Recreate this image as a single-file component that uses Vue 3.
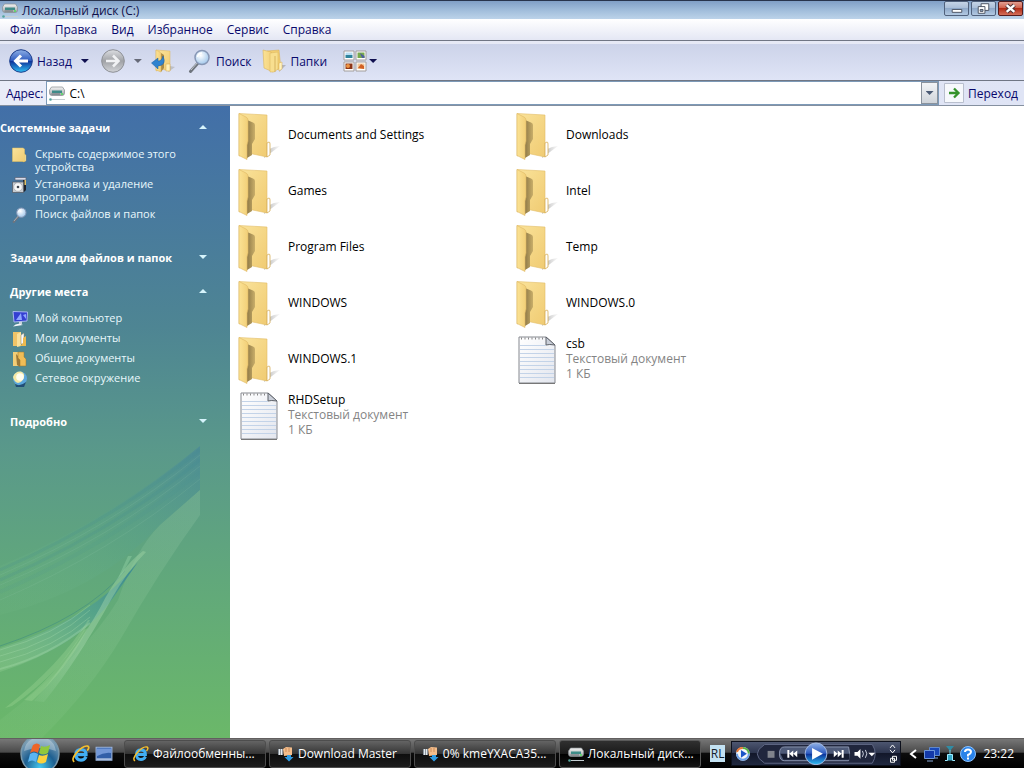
<template>
  <div class="window">
    <svg class="defs" aria-hidden="true">
      <defs>
        <linearGradient id="gFolder" x1="0" y1="0" x2="1" y2="1">
          <stop offset="0" stop-color="#fae39b" />
          <stop offset="1" stop-color="#f0cb72" />
        </linearGradient>
        <linearGradient id="gFlap" x1="0" y1="0" x2="1" y2="0">
          <stop offset="0" stop-color="#fbe294" />
          <stop offset="1" stop-color="#f2cf78" />
        </linearGradient>
        <linearGradient id="gDark" x1="0" y1="0" x2="1" y2="0">
          <stop offset="0" stop-color="#8f7a48" />
          <stop offset="1" stop-color="#c9ae69" />
        </linearGradient>
        <linearGradient id="gShadow" x1="0" y1="0" x2="1" y2="0">
          <stop offset="0" stop-color="#8c8c8c" />
          <stop offset="1" stop-color="#c8c8c8" stop-opacity="0.2" />
        </linearGradient>
        <linearGradient id="gPaper" x1="0" y1="0" x2="1" y2="1">
          <stop offset="0" stop-color="#ffffff" />
          <stop offset="1" stop-color="#e3e6ee" />
        </linearGradient>
        <linearGradient id="gBlue" x1="0" y1="0" x2="0" y2="1">
          <stop offset="0" stop-color="#8fb0e6" />
          <stop offset="0.48" stop-color="#2f5cc0" />
          <stop offset="0.5" stop-color="#0c2f98" />
          <stop offset="1" stop-color="#2fc0f4" />
        </linearGradient>
        <linearGradient id="gGrey" x1="0" y1="0" x2="0" y2="1">
          <stop offset="0" stop-color="#dcdee2" />
          <stop offset="0.5" stop-color="#a0a2a6" />
          <stop offset="1" stop-color="#d2d4d8" />
        </linearGradient>
        <radialGradient id="gOrb" cx="0.5" cy="0.85" r="0.8">
          <stop offset="0" stop-color="#43c6ee" />
          <stop offset="0.5" stop-color="#1e5f90" />
          <stop offset="1" stop-color="#8ba9bd" />
        </radialGradient>
        <linearGradient id="gDrive" x1="0" y1="0" x2="0" y2="1">
          <stop offset="0" stop-color="#f4f4f4" />
          <stop offset="1" stop-color="#9da2a6" />
        </linearGradient>
        <radialGradient id="gLens" cx="0.4" cy="0.35" r="0.7">
          <stop offset="0" stop-color="#ffffff" />
          <stop offset="1" stop-color="#9cc4ea" />
        </radialGradient>
      </defs>

      <symbol id="folder" viewBox="0 0 48 48">
        <path d="M28 46 L44 34 L38 35 L31 38Z" fill="url(#gShadow)" opacity="0.8" />
        <path d="M3 1.500 L31 3 V45 L12 41 L3 44Z" fill="url(#gFolder)" stroke="#e2bd68" stroke-width="0.600" />
        <path d="M11 8 L17 10.500 Q19 11 19 13 V27 L16 32 V43 L11 46Z" fill="url(#gDark)" />
        <path d="M3 1.500 L10 5 Q12 6 12 8 V29 L11 33 V47.500 L3 43.500Z" fill="url(#gFlap)" stroke="#dfb964" stroke-width="0.600" />
        <path d="M31 31 L33 30 Q34 30 34 32 V43 L31 45Z" fill="#fff" stroke="#d5ac55" stroke-width="0.800" />
      </symbol>

      <symbol id="text" viewBox="0 0 48 48">
        <path d="M5 1 H32 L41 9 V47 H5Z" fill="url(#gPaper)" stroke="#85888f" />
        <path d="M32 1 L41 9 Q35 8 32 9Z" fill="#c9ced8" stroke="#5d6168" />
        <path d="M6 9.500H32M6 13.500H40M6 17.500H40M6 21.500H40M6 25.500H40M6 29.500H40M6 33.500H40M6 37.500H40M6 41.500H40" stroke="#c3d3e8" />
        <path d="M7 2.500H31" stroke="#888" stroke-width="2" stroke-dasharray="1 2.500" />
        <path d="M5 47.500H41" stroke="#777" />
      </symbol>

      <symbol id="drive" viewBox="0 0 16 16">
        <path d="M2.500 2 H13.500 L15.500 5 V8 Q15.500 10.500 13 10.500 H3 Q0.500 10.500 0.500 8 V5Z" fill="url(#gDrive)" stroke="#868c90" stroke-width="0.700" />
        <path d="M3 5.500H13V8H3Z" fill="#3f8b88" />
        <path d="M2.500 9H11" stroke="#6a7076" />
        <path d="M12 9H14" stroke="#4fe05b" stroke-width="1.500" />
        <path d="M3 14.500H16" stroke="#c5ced2" />
        <circle cx="1.500" cy="14.500" r="1.300" fill="#53a49c" />
      </symbol>

      <symbol id="back" viewBox="0 0 24 24">
        <circle cx="12" cy="12" r="11.300" fill="url(#gBlue)" stroke="#1d3e8c" />
        <path d="M19 12H7M12 6.500 L6.500 12 L12 17.500" fill="none" stroke="#fff" stroke-width="3" />
      </symbol>
      <symbol id="forward" viewBox="0 0 24 24">
        <circle cx="12" cy="12" r="11.300" fill="url(#gGrey)" stroke="#8d9096" />
        <path d="M5 12H17M12 6.500 L17.500 12 L12 17.500" fill="none" stroke="#f1f2f4" stroke-width="2.500" />
      </symbol>
      <symbol id="up" viewBox="0 0 24 24">
        <path d="M17 23L24 18L19 17Z" fill="#aaa" opacity="0.600" />
        <path d="M5 1L19 2V22L10 20L5 22Z" fill="url(#gFolder)" stroke="#dcb45c" stroke-width="0.500" />
        <path d="M10 4L13 6V19L10 23Z" fill="#a98b48" />
        <path d="M5 1L9 3Q10 4 10 6V23L5 21Z" fill="url(#gFlap)" stroke="#dcb45c" stroke-width="0.500" />
        <path d="M15 15H19V22H15Z" fill="#fff0b8" stroke="#d5a94b" stroke-width="0.500" />
        <path d="M0.500 14L7 9V12Q11 12 12 7Q16 16 7 17V20Z" fill="#2f83cf" stroke="#1a5c9e" stroke-width="0.500" />
      </symbol>
      <symbol id="search" viewBox="0 0 24 24">
        <path d="M10 14L2.500 22.500" stroke="#6f757e" stroke-width="3" stroke-linecap="round" />
        <path d="M9.500 13.500L3 21" stroke="#c3c8ce" stroke-width="1" />
        <circle cx="14" cy="8.500" r="7" fill="url(#gLens)" stroke="#8797b5" stroke-width="1.500" />
        <path d="M9.500 8A5 5 0 0 1 14 4" fill="none" stroke="#fff" stroke-width="1.500" />
      </symbol>
      <symbol id="folders" viewBox="0 0 24 24">
        <path d="M17 23L24 16L18 16Z" fill="#999" opacity="0.600" />
        <path d="M5 2L17 1L19 20L10 21Z" fill="#f2cf72" stroke="#d8ad51" stroke-width="0.500" />
        <path d="M1 1L9 3L11 5V23L2 19Z" fill="url(#gFlap)" stroke="#dab35a" stroke-width="0.600" />
        <path d="M8 4L16 3V20L12 23H8Z" fill="#f8df8f" stroke="#dab35a" stroke-width="0.500" />
        <path d="M13 7V23" stroke="#c9a04a" stroke-width="0.700" />
        <path d="M17 14L20 13V20L17 22Z" fill="#fff3c0" stroke="#d8ad51" stroke-width="0.500" />
      </symbol>
      <symbol id="views" viewBox="0 0 24 24">
        <path d="M1 2H11V11H1ZM13 2H23V11H13ZM1 13H11V22H1ZM13 13H23V22H13Z" fill="#fff" stroke="#a29d9b" />
        <path d="M2.500 3.500H9.500V6H2.500Z" fill="#b7ddf2" />
        <path d="M2.500 6H9.500V9H2.500Z" fill="#2f849c" />
        <path d="M14.500 3.500H21.500V9H14.500Z" fill="#77a94c" />
        <path d="M17 4L21.500 7V9H19Z" fill="#4e5f9c" />
        <path d="M2.500 14.500H9.500V20H2.500Z" fill="#8c3517" />
        <circle cx="5" cy="17" r="2" fill="#ed9342" />
        <path d="M14.500 14.500H21.500V20H14.500Z" fill="#f0c79a" />
        <path d="M15 19L18 15L21 17V20Z" fill="#d26024" />
      </symbol>

      <symbol id="smallFolder" viewBox="0 0 16 16">
        <path d="M11 6L14 8V14L11 15Z" fill="#f7e7ad" stroke="#b99a4d" stroke-width="0.500" />
        <path d="M0.500 1H11L12.500 2V14.500H0.500Z" fill="url(#gFolder)" stroke="#e4c25f" stroke-width="0.500" />
      </symbol>
      <symbol id="programs" viewBox="0 0 16 16">
        <path d="M3 0.500H14V3H3Z" fill="#d8dcea" stroke="#5a6174" stroke-width="0.700" />
        <path d="M11 3H14V13L12 15Z" fill="#20222a" />
        <path d="M12.500 3H14V8H12.500Z" fill="#e0c168" />
        <path d="M0.500 5H11.500V15.500H0.500Z" fill="#c6cbd0" stroke="#50545c" stroke-width="0.700" />
        <circle cx="6" cy="10" r="4.300" fill="#f7f7f7" stroke="#8f949c" stroke-width="0.500" />
        <circle cx="6" cy="10" r="1.300" fill="#414750" />
      </symbol>
      <symbol id="computer" viewBox="0 0 16 16">
        <path d="M1 0.500L15.500 1L15 10L2 11Z" fill="#343fd2" stroke="#a7b7ee" />
        <path d="M4 9L9 2L10 9ZM11 4L14 3V8Z" fill="#8ea6ff" />
        <path d="M7 11L10 10.500V13H7Z" fill="#cbd3dc" />
        <path d="M1 15.500Q5 11 11 14Z" fill="#f4f7fa" />
      </symbol>
      <symbol id="documents" viewBox="0 0 16 16">
        <path d="M1 1H9V15H1Z" fill="#f0c468" />
        <path d="M5 3L9 1V15L5 16Z" fill="#fae09b" />
        <path d="M9 4L12 2V13H9Z" fill="#f7fafe" stroke="#8f8361" stroke-width="0.500" />
        <path d="M11 7L14 5V15H8L11 12Z" fill="#edb94f" />
      </symbol>
      <symbol id="shared" viewBox="0 0 16 16">
        <path d="M1 1H8V15H1Z" fill="#f3cd76" />
        <path d="M4 3L8 7V16L5 14Z" fill="#9c7838" />
        <path d="M6 1H12V6L14 8V15H8V9L6 7Z" fill="#f0bd57" stroke="#99742f" stroke-width="0.500" />
      </symbol>
      <symbol id="network" viewBox="0 0 16 16">
        <circle cx="8" cy="7.500" r="7" fill="#5ba6dc" />
        <path d="M1 6Q3 0 9 0.500Q13 2 12 6Q11 11 6 12Q2 11 1 6Z" fill="#f5e9a4" />
        <circle cx="8" cy="6" r="3.800" fill="#fffef0" />
        <path d="M3 13Q8 16 14 11L12 16H4Z" fill="#214d75" />
      </symbol>

      <symbol id="ie" viewBox="0 0 16 16">
        <path d="M12.500 10.500Q11 13.500 8 13.500Q3.500 13.500 3.500 8.500Q3.500 4 8 4Q12.500 4 12.500 8.500H5" fill="none" stroke="#42aef2" stroke-width="2.800" />
        <path d="M2 15Q-1 13 4 7Q10 0 14 1Q16 2 13.500 5" fill="none" stroke="#f5bf2d" stroke-width="1.500" />
      </symbol>
      <symbol id="desktop" viewBox="0 0 16 16">
        <path d="M1 2H15V13.500H1Z" fill="#315ea8" stroke="#9cb5dc" />
        <path d="M1.500 3H14.500V7Q8 6 1.500 10Z" fill="#7297d7" />
        <path d="M1.500 12.500H14.500" stroke="#e0e9f7" />
      </symbol>
      <symbol id="download" viewBox="0 0 16 16">
        <path d="M0 3H5V9H0Z" fill="#8c959e" />
        <path d="M1.500 3V9M3.500 3V9" stroke="#e5eaee" />
        <path d="M5 3L8 1L14 1.500L14 9L6 10Z" fill="#f4bd8b" />
        <path d="M8 2V6M11 2V6" stroke="#b97848" stroke-width="0.700" />
        <path d="M9 9H13V11H15.500L11 15.500L6.500 11H9Z" fill="#2f9be2" />
      </symbol>
      <symbol id="flag" viewBox="0 0 40 40">
        <circle cx="20" cy="20" r="19" fill="url(#gOrb)" stroke="#7898ac" stroke-width="1.500" />
        <path d="M4 17Q6 4 20 3Q34 4 36 17Q20 11 4 17Z" fill="#fff" opacity="0.300" />
        <path d="M13 11Q17 8 20 11L18 19Q14 16 10 19Z" fill="#ee6429" />
        <path d="M21 12Q25 14 30 11L28 19Q23 22 19 19Z" fill="#91c83d" />
        <path d="M10 20Q14 17 18 20L16 28Q12 25 8 28Z" fill="#5bb5f2" />
        <path d="M19 21Q23 23 28 20L26 28Q21 31 17 28Z" fill="#fcd13c" />
      </symbol>
    </svg>

    <header class="titlebar">
      <svg class="i16"><use href="#drive" /></svg>
      <h1>Локальный диск (C:)</h1>
      <div class="winbuttons">
        <button aria-label="Свернуть">
          <svg viewBox="0 0 24 13"><path d="M7.500 7.500H17.500V10.500H7.500Z" fill="#fff" stroke="#4a5361" /></svg>
        </button>
        <button aria-label="Восстановить">
          <svg viewBox="0 0 24 13">
            <path d="M9.500 1.500H17.500V8.500H9.500Z" fill="#fff" stroke="#4a5361" />
            <path d="M6.500 4.500H13.500V11.500H6.500Z" fill="#fff" stroke="#4a5361" />
            <path d="M8.500 7.500H11.500V9.500H8.500Z" fill="#8ea4bf" stroke="#4a5361" />
          </svg>
        </button>
        <button class="close" aria-label="Закрыть">
          <svg viewBox="0 0 24 13">
            <path d="M8 3L16 10M16 3L8 10" stroke="#4d3236" stroke-width="4.500" />
            <path d="M8 3L16 10M16 3L8 10" stroke="#fff" stroke-width="2.500" />
          </svg>
        </button>
      </div>
    </header>

    <nav class="menubar">
      <button v-for="item in menu" :key="item">{{ item }}</button>
    </nav>

    <div class="toolbar">
      <button class="tool"><svg class="i24"><use href="#back" /></svg>Назад</button>
      <button class="arrow" aria-label="Назад: список"></button>
      <button class="tool forward" aria-label="Вперед"><svg class="i24"><use href="#forward" /></svg></button>
      <button class="arrow dim" aria-label="Вперед: список"></button>
      <button class="tool up" aria-label="Вверх"><svg class="i24"><use href="#up" /></svg></button>
      <button class="tool find"><svg class="i24"><use href="#search" /></svg>Поиск</button>
      <button class="tool tree"><svg class="i24"><use href="#folders" /></svg>Папки</button>
      <button class="tool view" aria-label="Вид"><svg class="i24"><use href="#views" /></svg><span class="arrow"></span></button>
    </div>

    <form class="address" @submit.prevent>
      <label for="path">Адрес:</label>
      <div class="field">
        <svg class="i16"><use href="#drive" /></svg>
        <input id="path" v-model="path" type="text" />
        <button type="button" class="drop" aria-label="Список адресов"><span class="arrow"></span></button>
      </div>
      <button class="go">
        <svg viewBox="0 0 20 20">
          <path d="M0.500 0.500H19.500V19.500H0.500Z" fill="#f6f8fc" stroke="#b9bfce" />
          <path d="M5 10H14M10 5.500L14.500 10L10 14.500" fill="none" stroke="#35932c" stroke-width="2.300" />
        </svg>
        Переход
      </button>
    </form>

    <div class="body">
      <aside class="sidebar">
        <svg class="aurora" viewBox="0 0 200 298" aria-hidden="true">
          <defs>
            <linearGradient id="gBand" x1="1" y1="0" x2="0" y2="1">
              <stop offset="0" stop-color="#3f7fa0" stop-opacity="0.45" />
              <stop offset="0.5" stop-color="#58a58e" stop-opacity="0.2" />
              <stop offset="1" stop-color="#8fd09a" stop-opacity="0.05" />
            </linearGradient>
            <linearGradient id="gRay" x1="1" y1="0" x2="0" y2="1">
              <stop offset="0" stop-color="#9fcfae" stop-opacity="0.22" />
              <stop offset="1" stop-color="#a5dba0" stop-opacity="0.08" />
            </linearGradient>
            <linearGradient id="gWing" x1="1" y1="0" x2="0" y2="1">
              <stop offset="0" stop-color="#2d7d97" stop-opacity="0.8" />
              <stop offset="0.4" stop-color="#4b9d98" stop-opacity="0.55" />
              <stop offset="1" stop-color="#b5e4ab" stop-opacity="0.2" />
            </linearGradient>
            <linearGradient id="gBeam" x1="1" y1="0" x2="0" y2="1">
              <stop offset="0" stop-color="#a4d8a6" stop-opacity="0.4" />
              <stop offset="0.6" stop-color="#a8d8b0" stop-opacity="0.45" />
              <stop offset="1" stop-color="#a4d8a6" stop-opacity="0.1" />
            </linearGradient>
          </defs>
          <path d="M200 6Q110 80 0 126V175Q100 150 160 85L200 50Z" fill="url(#gBand)" />
          <g fill="none" stroke="#3e8795" stroke-opacity="0.15">
            <path d="M200 10Q110 82 0 130" stroke-width="3" />
            <path d="M200 20Q110 93 0 140" stroke-width="3" />
            <path d="M200 32Q110 104 0 152" stroke-width="4" stroke-opacity="0.08" />
          </g>
          <g fill="none" stroke="#9bd0b0" stroke-opacity="0.14">
            <path d="M200 15Q110 88 0 135" />
            <path d="M200 26Q110 99 0 145" />
            <path d="M200 39Q110 113 0 160" />
          </g>
          <path d="M200 50V75Q160 130 120 200Q90 250 42 298H0V280Q85 215 118 160Q135 110 160 85Z" fill="url(#gRay)" />
          <path d="M138 122Q92 180 0 208V232Q80 206 113 158Z" fill="url(#gWing)" />
          <g fill="none" stroke="#aee0b4" stroke-opacity="0.3">
            <path d="M90 165Q55 195 0 210" />
            <path d="M90 170Q55 202 0 216" />
            <path d="M90 177Q55 208 0 222" />
            <path d="M90 183Q50 216 0 229" stroke-width="2" />
          </g>
          <path d="M125 131Q85 178 0 206" fill="none" stroke="#2f8088" stroke-opacity="0.4" />
          <path d="M143 111L146 112Q128 130 112 158Q78 220 44 262L34 261Q75 212 100 168Q120 128 143 111Z" fill="url(#gBeam)" />
          <path d="M128 116H132L122 134L118 138Z" fill="#8ccba0" fill-opacity="0.5" />
          <path d="M88 180Q60 225 5 268L12 266Q65 230 90 180Z" fill="#b4e2a4" fill-opacity="0.25" />
          <path d="M84 190Q60 230 24 260L32 261Q68 228 88 188Z" fill="#b4e2a4" fill-opacity="0.25" />
        </svg>

        <section v-for="group in groups" :key="group.title" class="group">
          <h2>
            <button :aria-expanded="group.open">{{ group.title }}<span class="chevron" :class="{ open: group.open }"></span></button>
          </h2>
          <ul v-if="group.open" :class="{ places: group.places }">
            <li v-for="item in group.items" :key="item.text">
              <a href="#"><svg class="i16"><use :href="'#' + item.icon" /></svg><span>{{ item.text }}</span></a>
            </li>
          </ul>
        </section>
      </aside>

      <main class="files">
        <a v-for="file in files" :key="file.name" href="#" class="file">
          <svg class="i48"><use :href="file.size ? '#text' : '#folder'" /></svg>
          <span class="info">
            <span>{{ file.name }}</span>
            <template v-if="file.size">
              <span class="meta">Текстовый документ</span>
              <span class="meta">{{ file.size }}</span>
            </template>
          </span>
        </a>
      </main>
    </div>

    <footer class="taskbar">
      <button class="start" aria-label="Пуск"><svg><use href="#flag" /></svg></button>
      <div class="quick">
        <button aria-label="Internet Explorer"><svg class="i18"><use href="#ie" /></svg></button>
        <button aria-label="Рабочий стол"><svg class="i18"><use href="#desktop" /></svg></button>
      </div>
      <div class="tasks">
        <button v-for="task in tasks" :key="task.text" class="task" :class="{ active: task.active }">
          <svg class="i16"><use :href="'#' + task.icon" /></svg><span>{{ task.text }}</span>
        </button>
      </div>
      <button class="lang">RL</button>
      <div class="player">
        <svg viewBox="0 0 170 24" aria-hidden="true">
          <circle cx="11" cy="12" r="7" fill="#f5f7fa" />
          <path d="M5 10A6 6 0 0 1 11 6" fill="none" stroke="#e87836" stroke-width="2" />
          <path d="M11 6A6 6 0 0 1 17 12" fill="none" stroke="#57b446" stroke-width="2" />
          <path d="M17 12A6 6 0 0 1 5 12" fill="none" stroke="#6ca1e9" stroke-width="2" />
          <path d="M9 8L15 12L9 16Z" fill="#1b55c8" />
          <path d="M33 2.500H142Q148 12 142 21.500H33Q18 12 33 2.500Z" fill="#20263d" stroke="#5d6683" />
          <path d="M36 9H43V16H36Z" fill="#80838c" />
          <path d="M53 5H118Q120 12 118 19H53Q48 19 48 12Q48 5 53 5Z" fill="#4e5a78" stroke="#8993ae" />
          <path d="M49 12H119V18H52Z" fill="#151b30" />
          <path d="M56 8H58V16H56ZM62 8.500V15.500L58 12ZM66 8.500V15.500L62 12Z" fill="#fff" />
          <path d="M103 8.500L107 12L103 15.500ZM107 8.500L111 12L107 15.500ZM111 8H113V16H111Z" fill="#fff" />
          <circle cx="85" cy="12" r="11" fill="url(#gBlue)" stroke="#a4b9df" />
          <path d="M81 6L92 12L81 18Z" fill="#fff" />
          <path d="M124 10H127L130 7V17L127 14H124Z" fill="#fff" />
          <path d="M132 9Q134 12 132 15M135 8Q138 12 135 16" fill="none" stroke="#ccd1df" />
          <path d="M138 11H145L141.500 14.500Z" fill="#fff" />
          <path d="M160 6L162.500 3L165 6M160 8L162.500 11L165 8" fill="none" stroke="#fff" />
          <path d="M162.500 14.500H166.500V18.500H162.500ZM160.500 16.500H164.500V20.500H160.500Z" fill="#111827" stroke="#fff" />
        </svg>
      </div>
      <div class="tray">
        <svg class="hide" viewBox="0 0 8 10"><path d="M7 1L2 5L7 9" fill="none" stroke="#fff" stroke-width="2" /></svg>
        <svg class="i16" viewBox="0 0 16 16">
          <path d="M5.500 1.500H15.500V9.500H5.500Z" fill="#1a49b8" stroke="#5f88cc" />
          <path d="M0.500 4.500H10.500V12.500H0.500Z" fill="#1339a8" stroke="#6f97d8" />
          <path d="M3 15H9M11 12H14" stroke="#89a9da" />
        </svg>
        <svg class="narrow" viewBox="0 0 12 16">
          <path d="M2 0H10L6 5Z" fill="#318ca4" />
          <path d="M6 4V8" stroke="#75d8ea" />
          <path d="M1 14.500H3.500V8.500H8.500V14.500H11" fill="#36a9c8" stroke="#9eeaff" />
        </svg>
        <svg class="i16" viewBox="0 0 16 16">
          <circle cx="8" cy="8" r="7.500" fill="#2a83ea" stroke="#8cc3ff" />
          <path d="M5 6Q5 3.500 8 3.500Q11 3.500 11 6Q11 7.500 8 9V10.500M8 11.500V13.500" fill="none" stroke="#fff" stroke-width="2" />
        </svg>
        <time>23:22</time>
      </div>
    </footer>
  </div>
</template>

<script setup>
import { ref } from 'vue';

const path = ref('C:\\');

const menu = ['Файл', 'Правка', 'Вид', 'Избранное', 'Сервис', 'Справка'];

const groups = ref([
  {
    title: 'Системные задачи',
    open: true,
    items: [
      { icon: 'smallFolder', text: 'Скрыть содержимое этого устройства' },
      { icon: 'programs', text: 'Установка и удаление программ' },
      { icon: 'search', text: 'Поиск файлов и папок' },
    ],
  },
  { title: 'Задачи для файлов и папок', open: false },
  {
    title: 'Другие места',
    open: true,
    places: true,
    items: [
      { icon: 'computer', text: 'Мой компьютер' },
      { icon: 'documents', text: 'Мои документы' },
      { icon: 'shared', text: 'Общие документы' },
      { icon: 'network', text: 'Сетевое окружение' },
    ],
  },
  { title: 'Подробно', open: false },
]);

const files = [
  { name: 'Documents and Settings' },
  { name: 'Downloads' },
  { name: 'Games' },
  { name: 'Intel' },
  { name: 'Program Files' },
  { name: 'Temp' },
  { name: 'WINDOWS' },
  { name: 'WINDOWS.0' },
  { name: 'WINDOWS.1' },
  { name: 'csb', size: '1 КБ' },
  { name: 'RHDSetup', size: '1 КБ' },
];

const tasks = [
  { icon: 'ie', text: 'Файлообменны...' },
  { icon: 'download', text: 'Download Master' },
  { icon: 'download', text: '0% kmeYXACA35...' },
  { icon: 'drive', text: 'Локальный диск...', active: true },
];
</script>

<style>
body {
  margin: 0;
}
</style>

<style scoped>
.window {
  display: flex;
  flex-direction: column;
  min-height: 100vh;
  font-family: "Open Sans", "Noto Sans", sans-serif;
  font-size: 12px;
  line-height: 15px;
  color: #000;
  background: #fff;
}

.defs {
  position: absolute;
  width: 0;
  height: 0;
}

button {
  padding: 0;
  border: none;
  background: none;
  font: inherit;
  color: inherit;
}

a {
  color: inherit;
  text-decoration: none;
}

svg {
  display: block;
  flex: none;
}

.i16 {
  width: 16px;
  height: 16px;
}

.i18 {
  width: 18px;
  height: 18px;
}

.i24 {
  width: 24px;
  height: 24px;
}

.i48 {
  width: 48px;
  height: 48px;
}

.arrow {
  width: 8px;
  height: 4px;
  background: #101050;
  clip-path: polygon(0 0, 100% 0, 50% 100%);
}

.arrow.dim {
  background: #666a78;
}

/* Title */
.titlebar {
  display: flex;
  align-items: center;
  gap: 4px;
  height: 19px;
  box-sizing: border-box;
  padding: 0 1px 0 2px;
  border-top: 1px solid #28344c;
  color: #10104a;
  background: linear-gradient(#809fc6, #a3bfdc 55%, #bcd3e9);
}

.titlebar h1 {
  flex: 1;
  margin: 0;
  font-size: 12px;
  font-weight: normal;
}

.winbuttons {
  display: flex;
  align-self: flex-start;
  gap: 2px;
}

.winbuttons button {
  width: 25px;
  height: 15px;
  border: 1px solid #50617c;
  border-radius: 2px;
  background: linear-gradient(#c5d4e6, #a7bcd6 50%, #8fa9c9 50%, #b2c9e2);
}

.winbuttons .close {
  border-color: #571c1c;
  background: linear-gradient(#e2a093, #cf5b46 50%, #b32c17 50%, #d4705a);
}

.winbuttons svg {
  width: 23px;
  height: 13px;
}

/* Menu */
.menubar {
  display: flex;
  gap: 14px;
  height: 22px;
  box-sizing: border-box;
  padding: 0 10px;
  border-bottom: 1px solid #707684;
  color: #08086c;
  background: linear-gradient(#fff, #e4e7f4);
}

/* Toolbar */
.toolbar {
  display: flex;
  align-items: center;
  height: 40px;
  box-sizing: border-box;
  padding: 0 0 2px 9px;
  border-top: 3px solid #e6e9f5;
  border-bottom: 1px solid #707684;
  color: #08086c;
  background: linear-gradient(#ccd3e9, #dfe4f6);
}

.tool {
  display: flex;
  align-items: center;
  gap: 4px;
}

.toolbar > .arrow {
  margin-left: 9px;
}

.forward {
  margin-left: 12px;
}

.up {
  margin-left: 9px;
}

.find {
  margin-left: 13px;
}

.tree {
  margin-left: 11px;
}

.view {
  margin-left: 16px;
  gap: 2px;
}

/* Address */
.address {
  display: flex;
  align-items: center;
  height: 25px;
  box-sizing: border-box;
  border-bottom: 1px solid #8590a0;
  color: #08086c;
  background: linear-gradient(90deg, #e9ecf8, #dfe4f5);
}

.address label {
  padding: 0 3px 0 6px;
}

.field {
  display: flex;
  flex: 1;
  align-items: center;
  height: 24px;
  box-sizing: border-box;
  padding-left: 2px;
  border: 1px solid #7d9ab8;
  background: #fff;
}

.field input {
  flex: 1;
  min-width: 0;
  padding: 0 4px;
  border: none;
  outline: none;
  font: inherit;
  color: #000;
}

.drop {
  display: flex;
  align-items: center;
  justify-content: center;
  width: 17px;
  height: 22px;
  border: 1px solid #8a929c;
  background: linear-gradient(#f2f4f6, #cfd4da);
}

.drop .arrow {
  background: #4a5a74;
}

.go {
  display: flex;
  align-items: center;
  gap: 4px;
  padding: 0 6px 0 5px;
}

.go svg {
  width: 20px;
  height: 20px;
}

/* Sidebar */
.body {
  display: flex;
  flex: 1;
}

.sidebar {
  position: relative;
  flex: none;
  width: 230px;
  box-sizing: border-box;
  padding-top: 9px;
  font-size: 11px;
  line-height: 13px;
  color: #e8f8fc;
  background: linear-gradient(#426fa8, #4e8593 35%, #5a998a 55%, #61a87b 75%, #6bb869);
}

.aurora {
  position: absolute;
  left: 0;
  bottom: 0;
  width: 200px;
  height: 298px;
}

.group {
  position: relative;
  margin-bottom: 10px;
  padding-left: 10px;
}

.group:first-of-type {
  padding-left: 0;
}

.group:first-of-type ul {
  padding-left: 12px;
}

.group h2 {
  margin: 0;
  font-size: 11px;
}

.group h2 button {
  display: flex;
  align-items: center;
  justify-content: space-between;
  width: 100%;
  height: 24px;
  padding-right: 23px;
  font-weight: bold;
  color: #fff;
}

.chevron {
  width: 8px;
  height: 4px;
  background: #d6f4fc;
  clip-path: polygon(0 0, 100% 0, 50% 100%);
}

.chevron.open {
  clip-path: polygon(50% 0, 100% 100%, 0 100%);
}

.group ul {
  display: flex;
  flex-direction: column;
  gap: 4px;
  margin: 0;
  padding: 8px 40px 15px 2px;
  list-style: none;
}

.group .places {
  gap: 7px;
}

.group li a {
  display: flex;
  gap: 7px;
}

.group li svg {
  margin-bottom: -3px;
}

/* Files */
.files {
  display: grid;
  flex: 1;
  grid-template-columns: repeat(auto-fill, 278px);
  grid-auto-rows: 56px;
  align-content: start;
  padding: 2px 200px 0 6px;
}

.file {
  display: flex;
  align-items: center;
  gap: 4px;
}

.info {
  display: flex;
  flex-direction: column;
  padding-bottom: 3px;
}

.meta {
  color: #848484;
}

/* Taskbar */
.taskbar {
  display: flex;
  align-items: center;
  height: 30px;
  box-sizing: border-box;
  border-top: 1px solid #625f5f;
  color: #fff;
  background: linear-gradient(#777, #4a4a4a 45%, #0c0c0c 50%, #000);
}

.start {
  display: flex;
  align-items: center;
  height: 29px;
  margin-left: 20px;
  overflow: hidden;
}

.start svg {
  width: 40px;
  height: 40px;
}

.quick {
  display: flex;
  gap: 5px;
  padding: 0 11px 0 12px;
}

.tasks {
  display: grid;
  flex: 1;
  grid-template-columns: repeat(4, minmax(0, 1fr));
  gap: 3px;
}

.task {
  display: flex;
  align-items: center;
  gap: 4px;
  height: 28px;
  padding-left: 8px;
  border: 1px solid #4d4d4d;
  border-radius: 3px;
  white-space: nowrap;
  overflow: hidden;
  background: linear-gradient(#646464, #363636 48%, #0e0e0e 50%, #1c1c1c);
}

.task.active {
  border-color: #5a5a5a;
  background: linear-gradient(#303030, #1a1a1a 48%, #000 50%, #141414);
}

.lang {
  height: 17px;
  margin: 0 6px 0 9px;
  padding: 0 1px;
  color: #14202c;
  background: #c3e2f2;
}

.player {
  width: 170px;
  border: 1px solid #0c101c;
  box-sizing: border-box;
  background: linear-gradient(#4d5670, #2b334c 50%, #12172a 50%, #20283f);
}

.player svg {
  width: 100%;
}

.tray {
  display: flex;
  align-items: center;
  gap: 4px;
  padding: 0 10px 0 8px;
}

.hide {
  width: 8px;
  height: 10px;
  margin-right: 3px;
}

.narrow {
  width: 12px;
  height: 16px;
}

.tray time {
  margin-left: 3px;
}
</style>
